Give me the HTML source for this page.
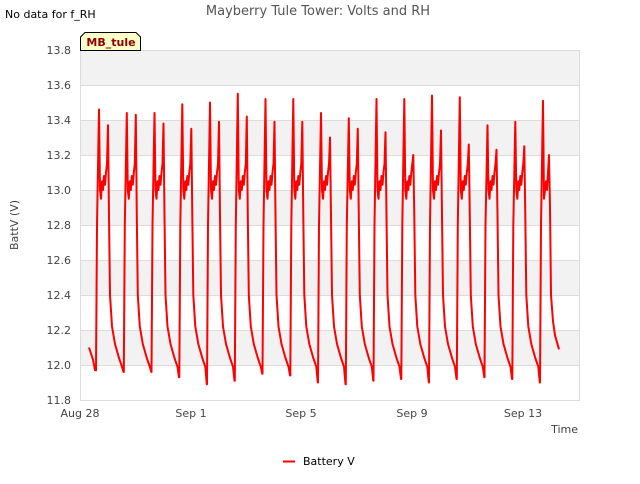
<!DOCTYPE html>
<html><head><meta charset="utf-8"><style>
body{margin:0;background:#fff;font-family:"DejaVu Sans","Liberation Sans",sans-serif;}
</style></head><body>
<svg width="640" height="480" xmlns="http://www.w3.org/2000/svg" font-family="DejaVu Sans, Liberation Sans, sans-serif">
<rect width="640" height="480" fill="#fff"/>
<g fill="#f2f2f2">
<rect x="80" y="50" width="500" height="35"/>
<rect x="80" y="120" width="500" height="35"/>
<rect x="80" y="190" width="500" height="35"/>
<rect x="80" y="260" width="500" height="35"/>
<rect x="80" y="330" width="500" height="35"/>
</g>
<g stroke="#dcdcdc" stroke-width="1">
<line x1="80" x2="580" y1="50.5" y2="50.5"/><line x1="80" x2="580" y1="85.5" y2="85.5"/>
<line x1="80" x2="580" y1="120.5" y2="120.5"/><line x1="80" x2="580" y1="155.5" y2="155.5"/>
<line x1="80" x2="580" y1="190.5" y2="190.5"/><line x1="80" x2="580" y1="225.5" y2="225.5"/>
<line x1="80" x2="580" y1="260.5" y2="260.5"/><line x1="80" x2="580" y1="295.5" y2="295.5"/>
<line x1="80" x2="580" y1="330.5" y2="330.5"/><line x1="80" x2="580" y1="365.5" y2="365.5"/>
<line x1="80.5" x2="80.5" y1="50" y2="400"/><line x1="579.5" x2="579.5" y1="50" y2="400"/>
<line x1="80" x2="580" y1="400.5" y2="400.5"/>
</g>
<g font-size="11" fill="#444" text-anchor="end">
<text x="71" y="54">13.8</text><text x="71" y="89">13.6</text><text x="71" y="124">13.4</text>
<text x="71" y="159">13.2</text><text x="71" y="194">13.0</text><text x="71" y="229">12.8</text>
<text x="71" y="264">12.6</text><text x="71" y="299">12.4</text><text x="71" y="334">12.2</text>
<text x="71" y="369">12.0</text><text x="71" y="404">11.8</text>
</g>
<g font-size="11" fill="#444" text-anchor="middle">
<text x="80" y="417">Aug 28</text><text x="191" y="417">Sep 1</text><text x="301" y="417">Sep 5</text>
<text x="412" y="417">Sep 9</text><text x="523" y="417">Sep 13</text>
</g>
<text x="578" y="433" font-size="11" fill="#444" text-anchor="end">Time</text>
<text x="18" y="225" font-size="11" fill="#444" text-anchor="middle" transform="rotate(-90 18 225)">BattV (V)</text>
<text x="318" y="15" font-size="13" fill="#555" text-anchor="middle">Mayberry Tule Tower: Volts and RH</text>
<text x="5" y="18" font-size="11" fill="#000">No data for f_RH</text>
<path d="M80.5,50.5 V37 L85,32.5 H136 L140.5,37 V50.5 Z" fill="#ffffc8" stroke="#000"/>
<text x="111" y="46" font-size="11" font-weight="bold" fill="#8b0000" text-anchor="middle">MB_tule</text>
<path id="d" fill="none" stroke="#ff0000" stroke-width="2" stroke-linejoin="round"/>
<line x1="283" x2="295" y1="461.5" y2="461.5" stroke="#ff0000" stroke-width="2"/>
<text x="303" y="465" font-size="11" fill="#000">Battery V</text>
</svg>
<script>
var Y=function(v){return 50+(13.8-v)*175;};
var p1=[13.46,13.44,13.44,13.49,13.50,13.55,13.52,13.52,13.44,13.41,13.52,13.52,13.54,13.53,13.37,13.39,13.51];
var p2=[13.37,13.43,13.38,13.35,13.39,13.42,13.39,13.39,13.30,13.35,13.33,13.20,13.34,13.26,13.23,13.25,13.20];
var mn=[11.97,11.96,11.96,11.93,11.89,11.91,11.95,11.94,11.90,11.89,11.91,11.92,11.90,11.92,11.93,11.92,11.90];
var s="M89,"+Y(12.10)+" L93,"+Y(12.03)+" L95,"+Y(11.97);
for(var i=0;i<17;i++){
 var x=97+27.75*i;
 var pts=[[-1,mn[i]],[0,12.8],[2,p1[i]],[3,13.0],[4,12.95],[5,13.05],[6,13.0],[7,13.08],[8,13.03],[9,13.1],[10,13.15],[11,p2[i]],[12,12.85],[13,12.4],[15,12.22],[18,12.12],[22,12.04],[25,11.99],[26.5,mn[(i+1)%17]]];
 if(i==16){pts=[[-1,mn[i]],[0,12.8],[2,p1[i]],[3,12.95],[4,13.0],[5,13.05],[6,13.0],[7,13.1],[8,13.2],[9,12.9],[10,12.4],[12,12.25],[14,12.17],[16,12.13],[18,12.09]];}
 for(var j=0;j<pts.length;j++){s+=" L"+(x+pts[j][0]).toFixed(1)+","+Y(pts[j][1]).toFixed(1);}
}
document.getElementById("d").setAttribute("d",s);
</script>
</body></html>
